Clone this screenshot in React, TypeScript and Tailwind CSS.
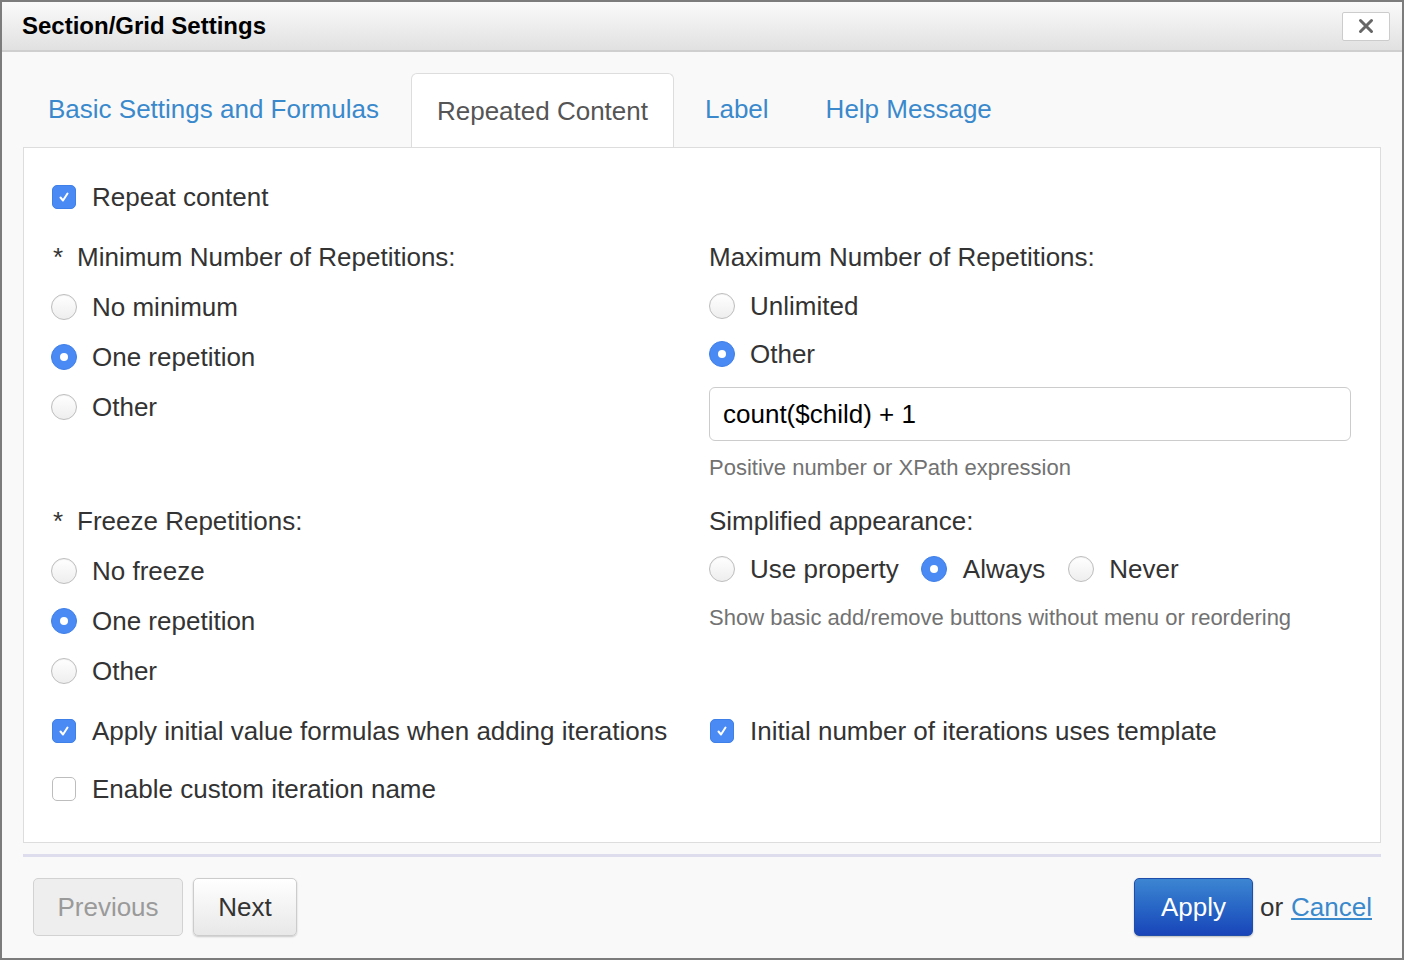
import React from 'react';

const font = { fontFamily: '"Liberation Sans", Arial, sans-serif' };

function Radio({ checked }: { checked?: boolean }) {
  if (checked) {
    return (
      <span className="w-[26px] h-[26px] rounded-full bg-[#4a8af4] border border-[#3f7fe8] flex items-center justify-center shrink-0">
        <span className="w-[8px] h-[8px] rounded-full bg-white" />
      </span>
    );
  }
  return (
    <span className="w-[26px] h-[26px] rounded-full border border-[#bdbdbd] bg-gradient-to-b from-white to-[#eeeeee] shadow-[inset_0_1px_1px_rgba(0,0,0,0.05)] shrink-0" />
  );
}

function Checkbox({ checked }: { checked?: boolean }) {
  if (checked) {
    return (
      <span className="w-[24px] h-[24px] rounded-[5px] bg-[#4a8af4] border border-[#3f7fe8] flex items-center justify-center shrink-0">
        <svg width="14" height="14" viewBox="0 0 14 14" fill="none">
          <path d="M3.5 7.5 L6 10.5 L10.5 3.5" stroke="white" strokeWidth="2" strokeLinecap="round" strokeLinejoin="round" />
        </svg>
      </span>
    );
  }
  return <span className="w-[24px] h-[24px] rounded-[5px] border border-[#bdbdbd] bg-white shrink-0" />;
}

function RadioRow({ label, checked, h = 'h-[50px]' }: { label: string; checked?: boolean; h?: string }) {
  return (
    <div className={`${h} flex items-center gap-[15px]`}>
      <Radio checked={checked} />
      <span>{label}</span>
    </div>
  );
}

function Tab({ label, active }: { label: string; active?: boolean }) {
  if (active) {
    return (
      <div className="h-[75px] -mb-[1px] px-[25px] mr-[6px] flex items-center bg-white border border-[#dddddd] border-b-0 rounded-t-[6px] text-[#555555]">
        {label}
      </div>
    );
  }
  return <div className="h-[75px] px-[25px] mr-[7px] flex items-center text-[#3a89cc]">{label}</div>;
}

export default function App() {
  return (
    <div style={font} className="w-[1404px] h-[960px] bg-white">
      <div className="w-full h-full border-2 border-[#7c7c7c] bg-[#f9f9f9] flex flex-col">
        {/* header */}
        <div className="h-[50px] shrink-0 flex items-center justify-between pl-[20px] pr-[12px] bg-gradient-to-b from-[#fafafa] to-[#e1e1e1] border-b-2 border-[#cfcfcf]">
          <span className="text-[24px] font-bold text-black">Section/Grid Settings</span>
          <button className="w-[48px] h-[29px] bg-white border border-[#cccccc] rounded-[2px] flex items-center justify-center">
            <svg width="16" height="16" viewBox="0 0 16 16">
              <path d="M2.5 2.5 L13.5 13.5 M13.5 2.5 L2.5 13.5" stroke="#666666" strokeWidth="3" strokeLinecap="round" />
            </svg>
          </button>
        </div>

        <div className="px-[21px] flex-1 flex flex-col text-[26px] text-[#333333]">
          {/* tabs */}
          <div className="mt-[20px] flex items-end">
            <Tab label="Basic Settings and Formulas" />
            <Tab label="Repeated Content" active />
            <Tab label="Label" />
            <Tab label="Help Message" />
          </div>

          {/* panel */}
          <div className="bg-white border border-[#dddddd] pl-[27px] pr-[29px] pt-[24px] pb-[28px]">
            <div className="h-[50px] flex items-center gap-[16px] pl-[1px]">
              <Checkbox checked />
              <span>Repeat content</span>
            </div>

            <div className="mt-[10px] grid grid-cols-[658px_1fr]">
              <div>
                <div className="h-[50px] flex items-center">
                  <span className="ml-[2px] w-[24px]">*</span>
                  <span>Minimum Number of Repetitions:</span>
                </div>
                <RadioRow label="No minimum" />
                <RadioRow label="One repetition" checked />
                <RadioRow label="Other" />
              </div>
              <div className="pb-[16px]">
                <div className="h-[50px] flex items-center">Maximum Number of Repetitions:</div>
                <RadioRow label="Unlimited" h="h-[48px]" />
                <RadioRow label="Other" checked h="h-[48px]" />
                <div className="mt-[9px] h-[54px] border border-[#cccccc] rounded-[6px] flex items-center px-[13px] text-black">
                  count($child) + 1
                </div>
                <div className="mt-[13px] h-[26px] flex items-center text-[22px] text-[#727272]">
                  Positive number or XPath expression
                </div>
              </div>

              <div>
                <div className="h-[50px] flex items-center">
                  <span className="ml-[2px] w-[24px]">*</span>
                  <span>Freeze Repetitions:</span>
                </div>
                <RadioRow label="No freeze" />
                <RadioRow label="One repetition" checked />
                <RadioRow label="Other" />
              </div>
              <div>
                <div className="h-[50px] flex items-center">Simplified appearance:</div>
                <div className="h-[46px] flex items-center">
                  <Radio />
                  <span className="ml-[15px] mr-[22px]">Use property</span>
                  <Radio checked />
                  <span className="ml-[16px] mr-[23px]">Always</span>
                  <Radio />
                  <span className="ml-[15px]">Never</span>
                </div>
                <div className="mt-[12px] h-[26px] flex items-center text-[22px] text-[#727272]">
                  Show basic add/remove buttons without menu or reordering
                </div>
              </div>

              <div className="mt-[10px] h-[50px] flex items-center gap-[16px] pl-[1px]">
                <Checkbox checked />
                <span>Apply initial value formulas when adding iterations</span>
              </div>
              <div className="mt-[10px] h-[50px] flex items-center gap-[16px] pl-[1px]">
                <Checkbox checked />
                <span>Initial number of iterations uses template</span>
              </div>

              <div className="mt-[8px] h-[50px] flex items-center gap-[16px] pl-[1px]">
                <Checkbox />
                <span>Enable custom iteration name</span>
              </div>
            </div>
          </div>

          {/* separator */}
          <div className="mt-[11px] h-[3px] bg-[#dedded]" />

          {/* footer */}
          <div className="mt-[21px] flex items-center justify-between pl-[10px] pr-[9px]">
            <div className="flex gap-[10px]">
              <button className="w-[150px] h-[58px] rounded-[5px] bg-[#eeeeee] border border-[#d2d2d2] text-[#9a9a9a]">
                Previous
              </button>
              <button className="w-[104px] h-[58px] rounded-[5px] bg-gradient-to-b from-white to-[#e8e8e8] border border-[#cccccc] shadow-[0_1px_2px_rgba(0,0,0,0.2)] text-[#333333]">
                Next
              </button>
            </div>
            <div className="flex items-center">
              <button className="w-[119px] h-[58px] rounded-[5px] bg-gradient-to-b from-[#3d86d2] to-[#1a44b9] border border-[#1f4eaa] shadow-[0_1px_2px_rgba(0,0,0,0.25)] text-white">
                Apply
              </button>
              <span className="ml-[7px] text-[#333333]">or</span>
              <a href="#" className="ml-[8px] text-[#3a89cc] underline">Cancel</a>
            </div>
          </div>
        </div>
      </div>
    </div>
  );
}
